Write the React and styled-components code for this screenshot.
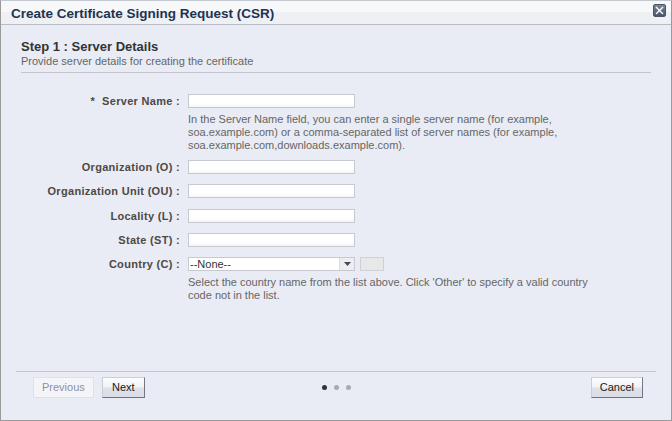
import React from 'react';
import styled, { createGlobalStyle } from 'styled-components';

const GlobalStyle = createGlobalStyle`
  html, body { margin: 0; padding: 0; background: #e9ecf4; }
  body { font-family: "Liberation Sans", Arial, sans-serif; }
  * { box-sizing: border-box; }
`;

const Dialog = styled.div`
  width: 672px;
  height: 421px;
  display: flex;
  flex-direction: column;
  background: #e9ecf4;
  border: 1px solid #9a9a9a;
  border-top-color: #c3c7ce;
`;

const Header = styled.div`
  height: 24px;
  display: flex;
  align-items: flex-start;
  justify-content: space-between;
  padding: 3px 5px 0 10px;
  background: linear-gradient(#f7f8f9 0%, #f7f8f9 48%, #eef0f4 48%, #eef0f4 100%);
  border-bottom: 1px solid #b9bdc5;
`;

const Title = styled.h1`
  margin: 0;
  font-size: 13.5px;
  line-height: 20px;
  font-weight: bold;
  color: #1d3450;
`;

const CloseButton = styled.button`
  width: 13px;
  height: 13px;
  padding: 0;
  margin: 0;
  display: flex;
  align-items: center;
  justify-content: center;
  border: 1px solid #4b5667;
  border-radius: 2px;
  background: linear-gradient(#7a889c, #46536a);
`;

const Body = styled.div`
  flex: 1;
  padding: 14px 20px 0 20px;
`;

const StepTitle = styled.h2`
  margin: 0;
  font-size: 13px;
  line-height: 15px;
  font-weight: bold;
  color: #333333;
`;

const StepSub = styled.div`
  font-size: 11px;
  line-height: 14px;
  color: #666666;
  padding-bottom: 4px;
  border-bottom: 1px solid #c2c6cc;
`;

const Form = styled.div`
  margin-top: 21px;
  display: grid;
  grid-template-columns: 159px 1fr;
  column-gap: 8px;
  row-gap: 10.3px;
`;

const Label = styled.label`
  text-align: right;
  font-size: 11px;
  line-height: 14px;
  font-weight: bold;
  letter-spacing: 0.3px;
  color: #4d4946;
  white-space: nowrap;
`;

const Star = styled.span`
  margin-right: 7px;
`;

const FieldCell = styled.div`
  display: flex;
  flex-direction: column;
  align-items: flex-start;
`;

const TextInput = styled.input`
  width: 167px;
  height: 14px;
  margin: 0;
  padding: 0 2px;
  border: 1px solid #c6c9cf;
  background: linear-gradient(#ffffff 70%, #f3f4f6);
  font-size: 11px;
  font-family: "Liberation Sans", Arial, sans-serif;
`;

const Help = styled.div`
  margin: 5px 0 -2.3px 0;
  font-size: 11px;
  line-height: 13px;
  color: #666666;
  white-space: nowrap;
`;

const SelectRow = styled.div`
  display: flex;
  align-items: center;
  gap: 5px;
`;

const Select = styled.div`
  width: 167px;
  height: 14px;
  display: flex;
  border: 1px solid #c6c9cf;
  background: #ffffff;
`;

const SelectValue = styled.div`
  flex: 1;
  padding-left: 1px;
  font-size: 11px;
  line-height: 12px;
  color: #333333;
`;

const SelectArrow = styled.div`
  width: 15px;
  display: flex;
  align-items: center;
  justify-content: center;
  background: #eceef1;
  border-left: 1px solid #d9dce0;
`;

const CodeBox = styled.div`
  width: 24px;
  height: 14px;
  border: 1px solid #cfd1d5;
  background: #e7e8ea;
`;

const Footer = styled.div`
  height: 49px;
  margin: 0 15px;
  padding: 5px 13px 0 17px;
  border-top: 1px solid #c2c6cc;
  display: grid;
  grid-template-columns: 1fr auto 1fr;
  align-items: start;
`;

const ButtonGroup = styled.div`
  display: flex;
  gap: 8px;
  justify-content: ${p => (p.$end ? 'flex-end' : 'flex-start')};
`;

const Button = styled.button`
  height: 21px;
  min-width: 43px;
  padding: 0 8px;
  margin: 0;
  font-family: "Liberation Sans", Arial, sans-serif;
  font-size: 11px;
  line-height: 19px;
  color: ${p => (p.disabled ? '#8f8fa6' : '#1a1a1a')};
  background: ${p => (p.disabled ? '#f3f5f9' : 'linear-gradient(#fbfcfd 0%, #f1f3f6 45%, #dde2ea 55%, #d8dde6 100%)')};
  border: 1px solid ${p => (p.disabled ? '#dde1e8' : '#c9cdd4')};
  border-right-color: ${p => (p.disabled ? '#dde1e8' : '#707884')};
  border-bottom-color: ${p => (p.disabled ? '#dde1e8' : '#6b737f')};
`;

const Dots = styled.div`
  display: flex;
  gap: 7px;
  padding-top: 8px;
  margin-left: -3px;
`;

const Dot = styled.span`
  width: 5px;
  height: 5px;
  border-radius: 50%;
  background: ${p => (p.$active ? '#333333' : '#a9abae')};
`;

const fields = [
  {
    label: 'Server Name',
    required: true,
    help: [
      'In the Server Name field, you can enter a single server name (for example,',
      'soa.example.com) or a comma-separated list of server names (for example,',
      'soa.example.com,downloads.example.com).',
    ],
  },
  { label: 'Organization (O)' },
  { label: 'Organization Unit (OU)' },
  { label: 'Locality (L)' },
  { label: 'State (ST)' },
  {
    label: 'Country (C)',
    select: true,
    help: [
      "Select the country name from the list above. Click 'Other' to specify a valid country",
      'code not in the list.',
    ],
  },
];

function HelpText({ lines }) {
  return (
    <Help>
      {lines.map((l, i) => (
        <React.Fragment key={i}>
          {l}
          {i < lines.length - 1 && <br />}
        </React.Fragment>
      ))}
    </Help>
  );
}

export default function App() {
  return (
    <>
      <GlobalStyle />
      <Dialog>
        <Header>
          <Title>Create Certificate Signing Request (CSR)</Title>
          <CloseButton aria-label="Close">
            <svg width="9" height="9" viewBox="0 0 9 9">
              <path d="M1 1 L8 8 M8 1 L1 8" stroke="#ffffff" strokeWidth="1.4" />
            </svg>
          </CloseButton>
        </Header>
        <Body>
          <StepTitle>Step 1 : Server Details</StepTitle>
          <StepSub>Provide server details for creating the certificate</StepSub>
          <Form>
            {fields.map(f => (
              <React.Fragment key={f.label}>
                <Label>
                  {f.required && <Star>*</Star>}
                  {f.label} :
                </Label>
                <FieldCell>
                  {f.select ? (
                    <SelectRow>
                      <Select>
                        <SelectValue>--None--</SelectValue>
                        <SelectArrow>
                          <svg width="7" height="4" viewBox="0 0 7 4">
                            <path d="M0 0 H7 L3.5 4 Z" fill="#444b55" />
                          </svg>
                        </SelectArrow>
                      </Select>
                      <CodeBox />
                    </SelectRow>
                  ) : (
                    <TextInput type="text" />
                  )}
                  {f.help && <HelpText lines={f.help} />}
                </FieldCell>
              </React.Fragment>
            ))}
          </Form>
        </Body>
        <Footer>
          <ButtonGroup>
            <Button disabled>Previous</Button>
            <Button>Next</Button>
          </ButtonGroup>
          <Dots>
            <Dot $active />
            <Dot />
            <Dot />
          </Dots>
          <ButtonGroup $end>
            <Button>Cancel</Button>
          </ButtonGroup>
        </Footer>
      </Dialog>
    </>
  );
}
